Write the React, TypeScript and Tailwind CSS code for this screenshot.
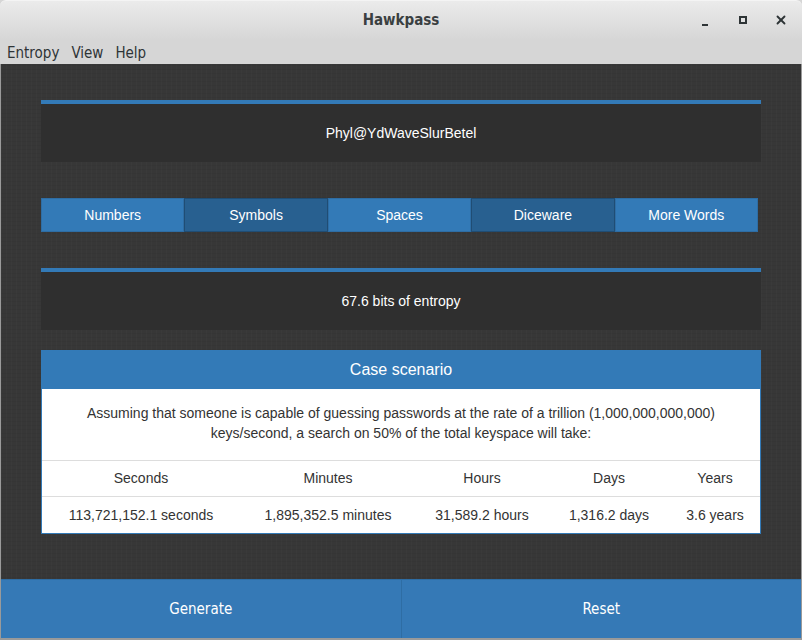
import { X } from "lucide-react";

const options = [
  { label: "Numbers", active: false },
  { label: "Symbols", active: true },
  { label: "Spaces", active: false },
  { label: "Diceware", active: true },
  { label: "More Words", active: false },
];

const columns = [
  { name: "Seconds", value: "113,721,152.1 seconds", w: "w-[198px]" },
  { name: "Minutes", value: "1,895,352.5 minutes", w: "w-[176px]" },
  { name: "Hours", value: "31,589.2 hours", w: "w-[132px]" },
  { name: "Days", value: "1,316.2 days", w: "w-[122px]" },
  { name: "Years", value: "3.6 years", w: "w-[90px]" },
];

export default function App() {
  return (
    <div className="w-[802px] h-[640px] flex flex-col bg-[#d6d6d6] overflow-hidden font-['Liberation_Sans',Arial,sans-serif]">
      {/* title bar */}
      <div className="h-[40px] flex items-center relative bg-gradient-to-b from-[#ebebeb] to-[#d6d6d6] border-t border-[#f4f4f4] rounded-t-[6px]">
        <div className="flex-1 text-center text-[15px] font-bold text-[#3a3f41] font-['Liberation_Sans_Narrow','DejaVu_Sans_Condensed',sans-serif]">
          Hawkpass
        </div>
        <div className="absolute right-[14px] top-[12px] flex items-center gap-[24px]">
          <div className="w-[14px] h-[14px] flex items-end justify-center">
            <div className="w-[6px] h-[2px] bg-[#2e3436] mb-[1px]" />
          </div>
          <div className="w-[14px] h-[14px] flex items-center justify-center">
            <div className="w-[8px] h-[8px] border-2 border-[#2e3436]" />
          </div>
          <X className="w-[14px] h-[14px] text-[#2e3436]" strokeWidth={3.2} />
        </div>
      </div>

      {/* menu bar */}
      <div className="h-[24px] flex items-center gap-[12px] px-[7px] pt-[2px] text-[15px] text-[#2e3436] font-['Liberation_Sans_Narrow','DejaVu_Sans_Condensed',sans-serif]">
        <span>Entropy</span>
        <span>View</span>
        <span>Help</span>
      </div>

      {/* content */}
      <div className="flex-1 flex flex-col border-x border-[#9a9a9a] bg-[#373737] bg-[repeating-linear-gradient(90deg,rgba(255,255,255,0.015)_0px,rgba(255,255,255,0.015)_1px,transparent_1px,transparent_5px),repeating-linear-gradient(0deg,rgba(0,0,0,0.04)_0px,rgba(0,0,0,0.04)_1px,transparent_1px,transparent_4px)]">
        <div className="flex-1 flex flex-col px-[40px] pt-[36px]">
          <div className="h-[62px] bg-[#2f2f2f] border-t-4 border-[#337ab7] flex items-center justify-center text-white text-[14px]">
            Phyl@YdWaveSlurBetel
          </div>

          <div className="mt-[36px] flex w-[717px] h-[34px]">
            {options.map((o) => (
              <div
                key={o.label}
                className={`flex-1 flex items-center justify-center text-white text-[14px] border ${
                  o.active ? "bg-[#286090] border-[#204d74]" : "bg-[#337ab7] border-[#2e6da4]"
                }`}
              >
                {o.label}
              </div>
            ))}
          </div>

          <div className="mt-[36px] h-[62px] bg-[#2f2f2f] border-t-4 border-[#337ab7] flex items-center justify-center text-white text-[14px]">
            67.6 bits of entropy
          </div>

          <div className="mt-[20px] border border-[#337ab7] bg-white">
            <div className="h-[38px] bg-[#337ab7] flex items-center justify-center text-white text-[16px]">
              Case scenario
            </div>
            <div className="px-[15px] pt-[14px] pb-[17px] text-center text-[14px] leading-[20px] text-[#333]">
              Assuming that someone is capable of guessing passwords at the rate of a trillion (1,000,000,000,000) keys/second, a search on 50% of the total keyspace will take:
            </div>
            <table className="w-full text-[14px] text-[#333] border-collapse">
              <thead>
                <tr className="border-t border-[#ddd]">
                  {columns.map((c) => (
                    <th key={c.name} className={`${c.w} font-normal h-[36px] text-center`}>
                      {c.name}
                    </th>
                  ))}
                </tr>
              </thead>
              <tbody>
                <tr className="border-t border-[#ddd]">
                  {columns.map((c) => (
                    <td key={c.name} className="h-[36px] text-center pt-[1px]">
                      {c.value}
                    </td>
                  ))}
                </tr>
              </tbody>
            </table>
          </div>
        </div>

        {/* bottom buttons */}
        <div className="h-[59px] flex border-t border-[#2e6da4] text-white text-[15px] font-['Liberation_Sans_Narrow','DejaVu_Sans_Condensed',sans-serif]">
          <div className="flex-1 flex items-center justify-center bg-[#3579b6] border-r border-[#2e6da4]">
            Generate
          </div>
          <div className="flex-1 flex items-center justify-center bg-[#3579b6]">
            Reset
          </div>
        </div>
      </div>
      <div className="h-[2px] bg-[#9a9a9a]" />
    </div>
  );
}
